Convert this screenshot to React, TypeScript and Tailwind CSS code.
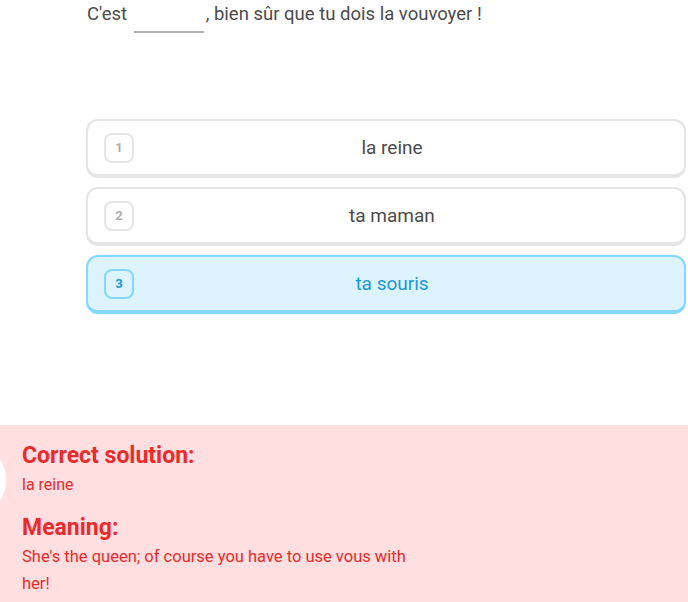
const choices = [
  { n: 1, label: 'la reine', selected: false },
  { n: 2, label: 'ta maman', selected: false },
  { n: 3, label: 'ta souris', selected: true },
];

export default function App() {
  return (
    <div className="relative h-[602px] w-[688px] overflow-hidden bg-white font-['Roboto',sans-serif] text-[#4b4b4b]">
      {/* Sentence */}
      <div className="pl-[87px] pt-[2px] text-[18.5px] leading-[24px]">
        C'est{' '}
        <span className="mx-[2px] inline-block h-[31px] w-[70px] border-b-2 border-[#afafaf] align-top" />
        , bien sûr que tu dois la vouvoyer !
      </div>

      {/* Choices */}
      <div className="ml-[86px] mt-[86px] flex w-[600px] flex-col gap-[9px]">
        {choices.map((c) => (
          <div
            key={c.n}
            className={
              c.selected
                ? 'flex h-[59px] items-center rounded-[12px] border-2 border-b-4 border-[#84d8ff] bg-[#ddf4ff] px-[16px]'
                : 'flex h-[59px] items-center rounded-[12px] border-2 border-b-4 border-[#e5e5e5] bg-white px-[16px]'
            }
          >
            <span
              className={
                c.selected
                  ? 'flex h-[30px] w-[30px] items-center justify-center rounded-[8px] border-2 border-[#84d8ff] text-[13px] font-bold text-[#1899d6]'
                  : 'flex h-[30px] w-[30px] items-center justify-center rounded-[8px] border-2 border-[#e5e5e5] text-[13px] font-bold text-[#afafaf]'
              }
            >
              {c.n}
            </span>
            <span
              className={
                c.selected
                  ? 'mr-[18px] flex-1 pt-[2px] text-center text-[19px] text-[#1899d6]'
                  : 'mr-[18px] flex-1 pt-[2px] text-center text-[19px] text-[#4b4b4b]'
              }
            >
              {c.label}
            </span>
          </div>
        ))}
      </div>

      {/* Feedback */}
      <div className="absolute bottom-0 left-0 right-0 h-[177px] bg-[#ffdfe0] pl-[22px] pt-[16px] text-[#ea2b2b]">
        <div className="absolute left-[-74px] top-[15px] h-[80px] w-[80px] rounded-full bg-white" />
        <div className="relative">
          <div className="text-[23px] font-bold leading-[30px]">Correct solution:</div>
          <div className="text-[16px] leading-[28px]">la reine</div>
          <div className="mt-[14px] text-[23px] font-bold leading-[30px]">Meaning:</div>
          <div className="w-[400px] text-[16.5px] leading-[27px]">
            She's the queen; of course you have to use vous with her!
          </div>
        </div>
      </div>
    </div>
  );
}
